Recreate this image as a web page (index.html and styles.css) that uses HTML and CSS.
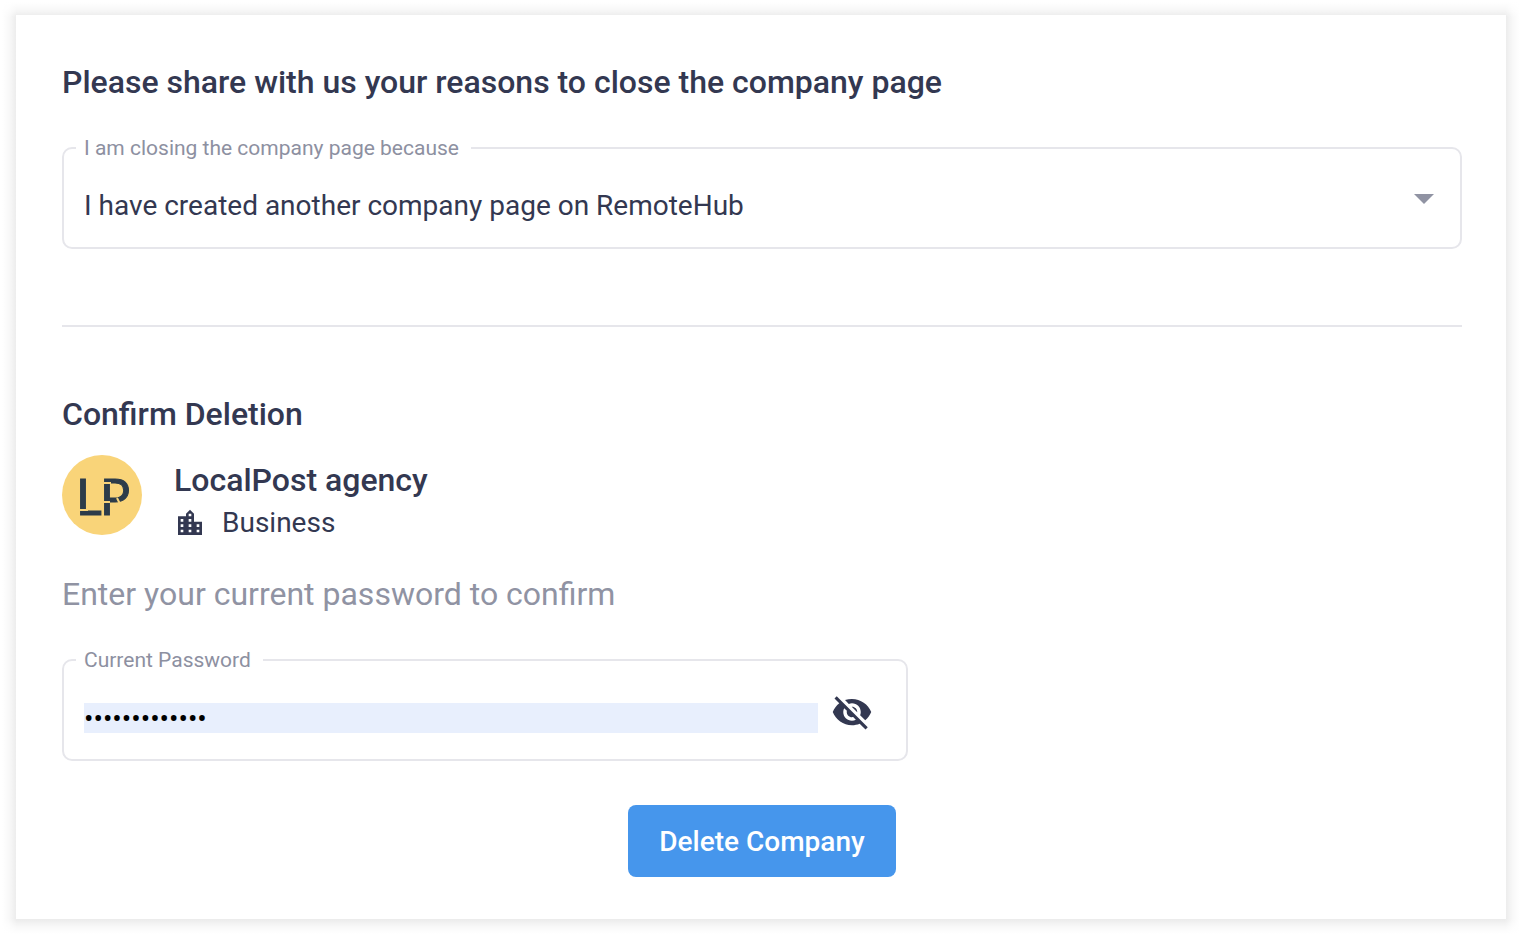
FILE: index.html
```
<!DOCTYPE html>
<html lang="en">
<head>
    <meta charset="UTF-8">
    <meta name="viewport" content="width=device-width, initial-scale=1.0">
    <title>Close company page</title>
    <link rel="stylesheet" href="styles.css">
</head>

<body>

    <div class="page">
    <form class="card">
        <h2>Please share with us your reasons to close the company page</h2>

        <!-- Reason -->
        <fieldset class="field">
            <legend><label for="reason">I am closing the company page because</label></legend>
            <div class="field-row">
                <select id="reason" class="field-select">
                    <option>I have created another company page on RemoteHub</option>
                </select>
                <svg class="arrow" viewBox="0 0 20 10" aria-hidden="true">
                    <path d="M0 0h20L10 10z"/>
                </svg>
            </div>
        </fieldset>

        <hr>

        <!-- Confirmation -->
        <h2>Confirm Deletion</h2>

        <div class="company">
            <svg class="avatar" viewBox="0 0 80 80" role="img" aria-label="LocalPost agency logo">
                <circle cx="40" cy="40" r="40" fill="#f9d479"/>
                <text class="avatar-text" x="14" y="60">L</text>
                <text class="avatar-text" x="38" y="60">P</text>
                <!-- stencil cuts -->
                <path d="M17 55h9M42 28h7M42 47h6M55 43l4 8" stroke="#f9d479" stroke-width="2"/>
            </svg>
            <div>
                <h3>LocalPost agency</h3>
                <div class="company-type">
                    <svg class="city" viewBox="0 0 24 24" aria-hidden="true">
                        <path d="M15 11V5l-3-3-3 3v2H3v14h18V11h-6zm-8 8H5v-2h2v2zm0-4H5v-2h2v2zm0-4H5V9h2v2zm6 8h-2v-2h2v2zm0-4h-2v-2h2v2zm0-4h-2V9h2v2zm0-4h-2V5h2v2zm6 12h-2v-2h2v2zm0-4h-2v-2h2v2z"/>
                    </svg>
                    <span>Business</span>
                </div>
            </div>
        </div>

        <p class="hint">Enter your current password to confirm</p>

        <fieldset class="field field-password">
            <legend><label for="password">Current Password</label></legend>
            <div class="field-row">
                <input type="password" id="password" class="field-input" value="localpost2021">
                <button type="button" class="toggle" aria-label="Show password">
                    <svg viewBox="0 0 24 24" aria-hidden="true">
                        <path d="M12 7c2.76 0 5 2.24 5 5 0 .65-.13 1.26-.36 1.83l2.92 2.92c1.51-1.26 2.7-2.89 3.43-4.75-1.73-4.39-6-7.5-11-7.5-1.4 0-2.74.25-3.98.7l2.16 2.16C10.74 7.13 11.35 7 12 7zM2 4.27l2.28 2.28.46.46C3.08 8.3 1.78 10.02 1 12c1.73 4.39 6 7.5 11 7.5 1.55 0 3.03-.3 4.38-.84l.42.42L19.73 22 21 20.73 3.27 3 2 4.27zM7.53 9.8l1.55 1.55c-.05.21-.08.43-.08.65 0 1.66 1.34 3 3 3 .22 0 .44-.03.65-.08l1.55 1.55c-.67.33-1.41.53-2.2.53-2.76 0-5-2.24-5-5 0-.79.2-1.53.53-2.2zm4.31-.78l3.15 3.15.02-.16c0-1.66-1.34-3-3-3l-.17.01z"/>
                    </svg>
                </button>
            </div>
        </fieldset>

        <button type="submit" class="delete-btn">Delete Company</button>
    </form>
    </div>

</body>
</html>
```
FILE: styles.css
```
* {
    box-sizing: border-box;
}
body {
    margin: 0;
    background-color: #fff;
    color: #333851;
    font-family: Roboto, Arial, sans-serif;
}
/* soft grey edge around the card */
.page {
    padding: 15px 16px 17px;
    background:
        linear-gradient(to right, #fff 2px, rgba(255, 255, 255, 0.7) 9px, transparent 17px, transparent calc(100% - 17px), rgba(255, 255, 255, 0.7) calc(100% - 9px), #fff calc(100% - 2px)),
        linear-gradient(to bottom, #fff 2px, rgba(255, 255, 255, 0.7) 9px, transparent 17px, transparent calc(100% - 17px), rgba(255, 255, 255, 0.7) calc(100% - 9px), #fff calc(100% - 2px)),
        #ebebeb;
}
.card {
    display: flex;
    flex-direction: column;
    padding: 47px 44px 42px 46px;
    background-color: #fff;
}
h2, h3 {
    margin: 0;
    font-size: 32px;
    font-weight: 500;
    line-height: 40px;
}
.field {
    min-width: 0;
    margin: 33px 0 0;
    padding: 0 34px 0 12px;
    border: 2px solid #e6e6eb;
    border-radius: 10px;
}
.field legend {
    padding: 0 12px 0 8px;
    color: #8d90a1;
    font-size: 21px;
    line-height: 26px;
}
.field-row {
    display: flex;
    align-items: center;
    height: 86px;
    padding: 4px 0 0 8px;
}
.field-select {
    flex: 1;
    min-width: 0;
    height: 38px;
    margin-bottom: 2px;
    padding: 0;
    border: none;
    outline: none;
    appearance: none;
    background: none;
    color: #333851;
    font-family: inherit;
    font-size: 28px;
    cursor: pointer;
}
.arrow {
    width: 20px;
    height: 10px;
    margin: 0 -8px 14px 0;
    fill: #9093a3;
    pointer-events: none;
}
hr {
    width: 100%;
    margin: 76px 0 67px;
    border: none;
    border-top: 2px solid #e6e6eb;
}
.company {
    display: flex;
    gap: 32px;
    margin-top: 21px;
}
.avatar {
    width: 80px;
    height: 80px;
}
.avatar-text {
    fill: #2d3c4a;
    stroke: #2d3c4a;
    font-family: Lato, sans-serif;
    font-size: 50px;
}
.company h3 {
    margin-top: 5px;
}
.company-type {
    display: flex;
    align-items: center;
    gap: 16px;
    margin-top: 3px;
    font-size: 28px;
    line-height: 40px;
}
.city {
    width: 32px;
    height: 32px;
    fill: #333851;
}
.hint {
    margin: 31px 0 0;
    color: #9093a3;
    font-size: 32px;
    line-height: 40px;
}
.field-password {
    width: 60.4%;
}
.field-input {
    flex: 1;
    min-width: 0;
    height: 30px;
    padding: 0;
    border: none;
    outline: none;
    background-color: #e8effd;
    color: #000;
    font-family: inherit;
    font-size: 28px;
}
.toggle {
    width: 42px;
    height: 42px;
    margin: 0 -1px 12px 13px;
    padding: 0;
    border: none;
    background: none;
    cursor: pointer;
}
.toggle svg {
    display: block;
    fill: #333851;
}
.delete-btn {
    align-self: center;
    height: 72px;
    margin-top: 44px;
    padding: 0 31px;
    border: none;
    border-radius: 8px;
    background-color: #4696ec;
    color: #fff;
    font-family: inherit;
    font-size: 28px;
    font-weight: 500;
    cursor: pointer;
}
.delete-btn:hover {
    background-color: #3182da;
}
```
